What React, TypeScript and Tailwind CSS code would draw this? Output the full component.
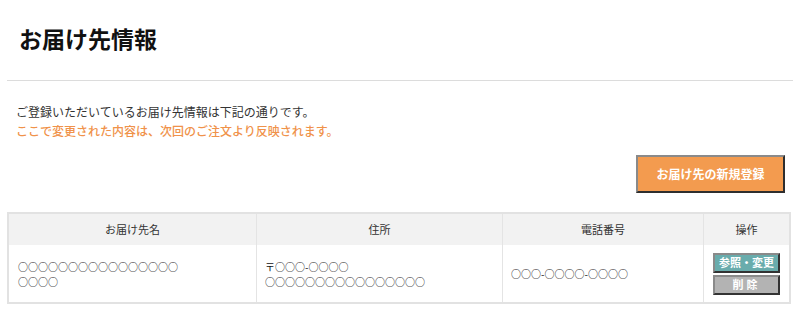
import React from "react";

export default function App() {
  const font = { fontFamily: '"Noto Sans CJK JP", "Noto Sans", sans-serif' };
  return (
    <div className="w-[800px] h-[315px] bg-white text-[#333]" style={font}>
      <div className="mx-[7px] h-[81px] flex items-center pb-[3px] border-b border-[#dcdcdc]">
        <h1 className="pl-[12px] text-[23px] font-bold text-[#111] leading-none">お届け先情報</h1>
      </div>
      <div className="pl-[16px] pt-[21px] text-[12px] leading-[19px]">
        <p className="text-[#333]">ご登録いただいているお届け先情報は下記の通りです。</p>
        <p className="text-[#f0924a] font-medium">ここで変更された内容は、次回のご注文より反映されます。</p>
      </div>
      <div className="flex justify-end pr-[15px] pt-[15px]">
        <button className="w-[149px] h-[38px] bg-[#f39b4f] text-white text-[12px] font-bold border-2 border-t-[#8a8a8a] border-l-[#8a8a8a] border-b-[#2e2e2e] border-r-[#2e2e2e]">
          お届け先の新規登録
        </button>
      </div>
      <div className="mx-[7px] mt-[19px] w-[784px] border-2 border-[#e2e2e2]">
        <div className="grid grid-cols-[248px_246px_201px_1fr] text-[11px]">
          <div className="h-[31px] flex items-center justify-center bg-[#f2f2f2] border-r border-[#e4e4e4]">お届け先名</div>
          <div className="h-[31px] flex items-center justify-center bg-[#f2f2f2] border-r border-[#e4e4e4]">住所</div>
          <div className="h-[31px] flex items-center justify-center bg-[#f2f2f2] border-r border-[#e4e4e4]">電話番号</div>
          <div className="h-[31px] flex items-center justify-center bg-[#f2f2f2]">操作</div>

          <div className="h-[57px] flex flex-col justify-center pl-[9px] text-[10px] leading-[15px] text-[#111] border-r border-[#e4e4e4]">
            <span>○○○○○○○○○○○○○○○○</span>
            <span>○○○○</span>
          </div>
          <div className="h-[57px] flex flex-col justify-center pl-[8px] text-[10px] leading-[15px] text-[#111] border-r border-[#e4e4e4]">
            <span>〒○○○-○○○○</span>
            <span>○○○○○○○○○○○○○○○○</span>
          </div>
          <div className="h-[57px] flex items-center pl-[8px] text-[10px] leading-[15px] text-[#111] border-r border-[#e4e4e4]">
            <span>○○○-○○○○-○○○○</span>
          </div>
          <div className="h-[57px] flex flex-col items-center justify-center gap-[2px]">
            <button className="w-[67px] h-[20px] bg-[#69acac] text-white text-[11px] font-bold leading-none border-2 border-t-[#8a8a8a] border-l-[#8a8a8a] border-b-[#333] border-r-[#333]">
              参照・変更
            </button>
            <button className="w-[67px] h-[20px] bg-[#b3b3b3] text-white text-[11px] font-bold leading-none tracking-[3px] border-2 border-t-[#8a8a8a] border-l-[#8a8a8a] border-b-[#333] border-r-[#333]">
              削除
            </button>
          </div>
        </div>
      </div>
    </div>
  );
}
